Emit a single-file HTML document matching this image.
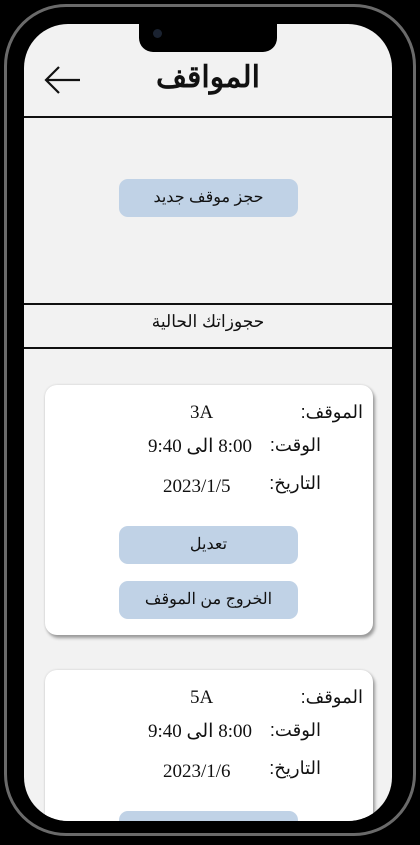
<!DOCTYPE html>
<html><head><meta charset="utf-8"><style>
*{margin:0;padding:0;box-sizing:border-box}
html,body{width:420px;height:845px;overflow:hidden}
body{background:#000;position:relative;font-family:"Liberation Sans","Noto Sans CJK SC",sans-serif}
.frame{position:absolute;left:4px;top:4px;width:412px;height:832px;border-radius:62px;border:3px solid #6a6a6a;background:#000}
.screen{position:absolute;left:24px;top:24px;width:368px;height:797px;border-radius:44px;background:#f2f2f2;overflow:hidden}
.notch{position:absolute;left:139px;top:24px;width:138px;height:28px;background:#000;border-radius:0 0 14px 14px}
.cam{position:absolute;left:153px;top:29px;width:9px;height:9px;border-radius:50%;background:#1a2230}
.line{position:absolute;left:0;width:368px;height:2px;background:#111}
.btn{position:absolute;left:95px;width:179px;height:38px;background:#c0d2e6;border-radius:9px;text-align:center;line-height:37px;font-size:16px;color:#111}
.card{position:absolute;left:21px;width:328px;height:250px;background:#fff;border-radius:12px;box-shadow:2px 3px 3px #999,0 0 2px #ccc}
.t{position:absolute;font-size:18px;color:#111;white-space:nowrap}
.s{font-family:"Liberation Serif","Noto Serif CJK SC",serif;font-size:19px}
</style></head><body>
<div class="frame"></div>
<div class="screen">
 <svg style="position:absolute;left:20px;top:42px" width="38" height="30" viewBox="0 0 38 30"><path d="M36 14H2M15 1L2 14L15 27" fill="none" stroke="#111" stroke-width="2.2"/></svg>
 <div class="t" style="left:0;width:368px;text-align:center;top:36px;font-size:30px;font-weight:bold">المواقف</div>
 <div class="line" style="top:92px"></div>
 <div class="btn" style="top:155px">حجز موقف جديد</div>
 <div class="line" style="top:279px"></div>
 <div class="t" style="left:0;width:368px;text-align:center;top:288px;font-size:17px">حجوزاتك الحالية</div>
 <div class="line" style="top:323px"></div>

 <div class="card" style="top:361px">
  <div class="t" style="right:10px;top:17px" dir="rtl">الموقف:</div>
  <div class="t s" style="left:145px;top:17px">3A</div>
  <div class="t" style="right:52px;top:50px" dir="rtl">الوقت:</div>
  <div class="t s" style="left:103px;top:50px" dir="rtl">8:00 الى 9:40</div>
  <div class="t" style="right:52px;top:88px" dir="rtl">التاريخ:</div>
  <div class="t s" style="left:118px;top:91px">2023/1/5</div>
  <div class="btn" style="left:74px;top:141px">تعديل</div>
  <div class="btn" style="left:74px;top:196px">الخروج من الموقف</div>
 </div>
 <div class="card" style="top:646px">
  <div class="t" style="right:10px;top:17px" dir="rtl">الموقف:</div>
  <div class="t s" style="left:145px;top:17px">5A</div>
  <div class="t" style="right:52px;top:50px" dir="rtl">الوقت:</div>
  <div class="t s" style="left:103px;top:50px" dir="rtl">8:00 الى 9:40</div>
  <div class="t" style="right:52px;top:88px" dir="rtl">التاريخ:</div>
  <div class="t s" style="left:118px;top:91px">2023/1/6</div>
  <div class="btn" style="left:74px;top:141px"></div>
 </div>
</div>
<div class="notch"></div>
<div class="cam"></div>
</body></html>
